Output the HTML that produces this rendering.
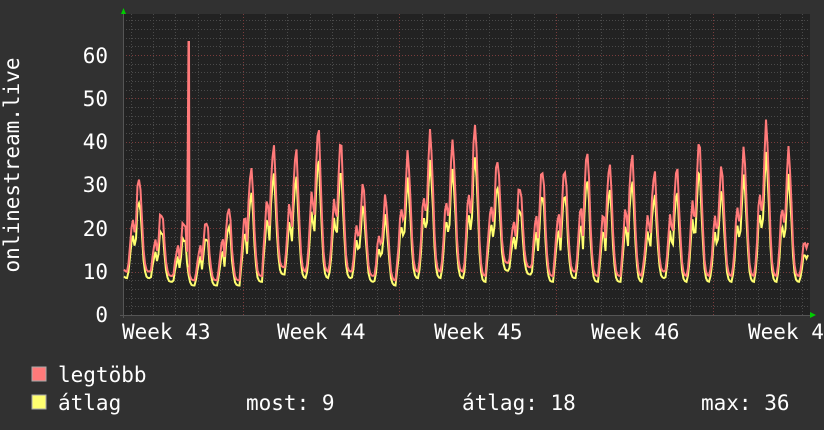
<!DOCTYPE html>
<html><head><meta charset="utf-8"><style>
html,body{margin:0;padding:0;background:#313131;}
body{width:824px;height:430px;overflow:hidden;position:relative;font-family:"DejaVu Sans Mono","Liberation Mono",monospace;color:#fff;}
svg{position:absolute;left:0;top:0}
</style></head><body>
<svg id="g" width="824" height="430" xmlns="http://www.w3.org/2000/svg">
<rect x="123" y="14" width="687" height="301" fill="#222"/>
<g id="grid"></g>
<g id="data"></g>
<g font-family="DejaVu Sans Mono, Liberation Mono, monospace" font-size="21" fill="#fff">
<text x="108" y="322" text-anchor="end">0</text>
<text x="108" y="279" text-anchor="end">10</text>
<text x="108" y="236" text-anchor="end">20</text>
<text x="108" y="192" text-anchor="end">30</text>
<text x="108" y="149" text-anchor="end">40</text>
<text x="108" y="106" text-anchor="end">50</text>
<text x="108" y="63" text-anchor="end">60</text>
<text x="122" y="339">Week 43</text>
<text x="277" y="339">Week 44</text>
<text x="434" y="339">Week 45</text>
<text x="591" y="339">Week 46</text>
<text x="748" y="339">Week 47</text>
<text transform="translate(19,165) rotate(-90)" text-anchor="middle">onlinestream.live</text>
<rect x="32" y="367" width="14" height="14" fill="#ff7a7a" stroke="#aaa" stroke-width="1"/>
<rect x="32" y="395" width="14" height="14" fill="#ffff70" stroke="#aaa" stroke-width="1"/>
<text x="58" y="382">legtöbb</text>
<text x="58" y="410">átlag</text>
<text x="246" y="410">most: 9</text>
<text x="462" y="410">átlag: 18</text>
<text x="701" y="410">max: 36</text>
</g>
<polygon points="121,14 126,14 123.5,8" fill="#0c0"/>
<polygon points="810,312 810,318 816,315" fill="#0c0"/>
</svg>
<script>
var ns="http://www.w3.org/2000/svg";
var grid=document.getElementById('grid'),data=document.getElementById('data');
function ln(x1,y1,x2,y2,c,d){var l=document.createElementNS(ns,'line');l.setAttribute('x1',x1);l.setAttribute('y1',y1);l.setAttribute('x2',x2);l.setAttribute('y2',y2);l.setAttribute('stroke',c);l.setAttribute('stroke-width',1);if(d)l.setAttribute('stroke-dasharray',d);grid.appendChild(l);}
var Y=function(v){return 315-v*4.333;};
for(var v=2;v<70;v+=2){var y=Math.round(Y(v))+0.5;ln(123,y,810,y,(v%10==0)?'#7a3c3c':'#4a4a4a','1,2');}
for(var x=130.5;x<810;x+=22.4){var m=false;[243,400,557,714].forEach(function(a){if(Math.abs(a-x)<3)m=true;});ln(Math.round(x)+0.5,14,Math.round(x)+0.5,315,m?'#7a3c3c':'#4a4a4a','1,2');}
ln(123.5,14,123.5,318,'#555');ln(120,315.5,810,315.5,'#555');
var pk=[32,24,22,22,25,34,39,38,43,40,30,27,37,42,40,44,36,30,34,34,38,35,37,33,34,40,34,38,44,38,24];
var mn=[10,9,8,8,8,9,11,10,10,10,9,8,10,10,10,9,12,11,9,10,9,9,9,10,9,9,9,9,9,9,9];
function val(x,k){var p=(x-139)/22.4;var d=Math.round(p);var f=p-d;var i=Math.max(0,Math.min(pk.length-1,d+0));
var a=Math.exp(-Math.pow(f/0.17,2));var b=0.55*Math.exp(-Math.pow((f+0.28)/0.14,2));var s=Math.max(a,b);
var P=pk[i]*k,M=mn[i]*(k<1?0.85:1);var n=Math.sin(x*1.7)*1.2;return M+(P-M)*s+n*s;}
function path(k,col){var s='';for(var x=124;x<=808;x+=1.5){var v=val(x,k);s+=(s?'L':'M')+x.toFixed(1)+','+Y(v).toFixed(1);
if(k==1&&x<=188&&x+1.5>188){s+='L188.5,'+Y(63).toFixed(1)+'L189,'+Y(63).toFixed(1)+'L189.5,'+Y(val(189.5,k)).toFixed(1);}}
var p=document.createElementNS(ns,'path');p.setAttribute('d',s);p.setAttribute('fill','none');p.setAttribute('stroke',col);p.setAttribute('stroke-width',2);data.appendChild(p);}
path(0.83,'#ffff70');path(1,'#ff7a7a');
</script>
</body></html>
